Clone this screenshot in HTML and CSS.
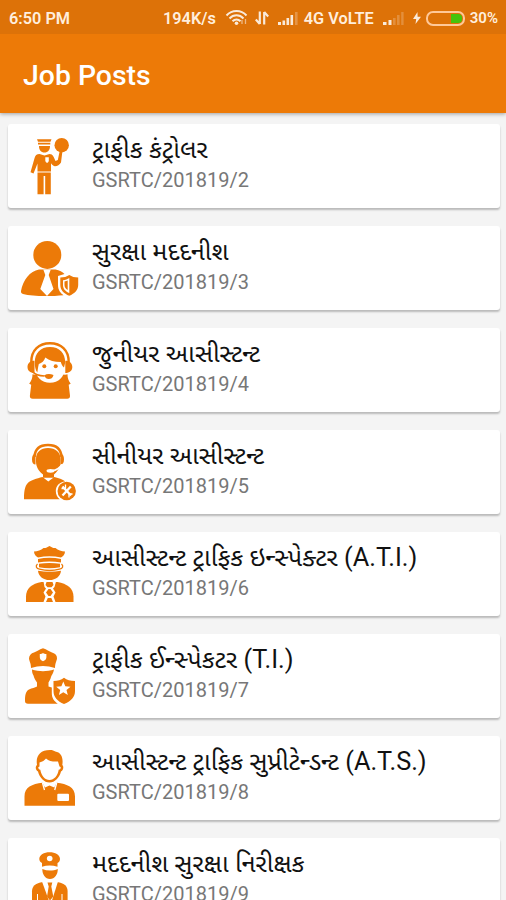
FILE: index.html
```html
<!DOCTYPE html>
<html lang="gu">
<head>
  <meta charset="UTF-8" />
  <meta name="viewport" content="width=device-width, initial-scale=1.0" />
  <title>Job Posts</title>
  <link rel="stylesheet" href="styles.css">
</head>
<body>

  <!-- status bar -->
  <div class="status-bar">
    <span class="time">6:50 PM</span>
    <span class="speed">194K/s</span>
    <svg class="wifi" width="24" height="18" viewBox="0 0 24 18">
      <g fill="none" stroke="#fff" stroke-width="2">
        <path d="M1.5 6.5C7 0.6 16 0.6 21.5 6.5" />
        <path d="M4.5 9.5c4-4.2 10-4.2 14 0" />
        <path d="M7.5 12.3c2.4-2.5 5.6-2.5 8 0" />
      </g>
      <circle cx="11.5" cy="14.3" r="1.8" fill="#fff" />
      <path d="M17 15v-4M20.5 10v5" stroke="#fff" stroke-width="1.3" opacity="0.6" />
    </svg>
    <svg class="data" width="14" height="14" viewBox="0 0 14 14">
      <path d="M4.8 0.5v12.500M0.800 8.500l4 4.500M9.200 13.500v-12.500M13.200 5.500l-4-4.500" fill="none" stroke="#fff" stroke-width="2.200" />
    </svg>
    <svg class="signal" width="20" height="13" viewBox="0 0 20 13">
      <path d="M0 10h3v3H0zM4.500 8.500h2.600V13H4.500zM8.500 6h2.600v7H8.500zM12.500 3h2.600v10h-2.600z" fill="#fff" />
      <path d="M17 0h2.600v13H17z" fill="#fff" opacity="0.3" />
    </svg>
    <span class="network">4G VoLTE</span>
    <svg class="signal2" width="21" height="13" viewBox="0 0 21 13">
      <path d="M0 10h3.500v3H0zM5.500 8h3v5h-3z" fill="#fff" />
      <path d="M10 6h2.600v7H10zM14 3h2.600v10H14zM18.200 0h2.400v13h-2.400z" fill="#fff" opacity="0.25" />
    </svg>
    <svg class="bolt" width="8" height="12" viewBox="0 0 8 12">
      <path d="M4.500 0L0 7h3.200L2.500 12 8 4.800H4.600z" fill="#fff" />
    </svg>
    <span class="battery"><span class="level"></span></span>
    <span class="percent">30%</span>
  </div>

  <header>
    <h1>Job Posts</h1>
  </header>

  <!-- job list -->
  <main class="job-list">
    <div class="card">
      <svg class="icon" viewBox="0 0 60 60">
        <path d="M17 3.300h14.500l-1 2.500h-12.500zM18 6.800h12.300v1.800H18zM19 10h11c0 4-2 6.500-5.500 6.500S19 14 19 10z" />
        <circle cx="41.700" cy="9.200" r="7.200" />
        <path d="M19.500 18l5 1.500 5-1.500c3.500 0 4.500 3.500 6 7l2.300-1 2-9.500h2.700L41 26.500c-1.500 2.300-3.500 3.500-6 3.800-1.500-.2-2.700-1.300-4-3v8.200H17.500v-8l-4 10-3-1.200 4-14c.6-2.800 2.200-4.300 5-4.300z" />
        <path d="M17.500 36.500h13.300v21.800h-5.600V40h-1.600v18.300h-6.100z" />
        <path class="cut" d="M25.300 21.300h3.500v3c0 1.500-.8 2.100-1.700 2.600-1-.5-1.800-1.100-1.800-2.600z" />
      </svg>
      <div class="info">
        <h2>ટ્રાફીક કંટ્રોલર</h2>
        <p>GSRTC/201819/2</p>
      </div>
    </div>

    <div class="card">
      <svg class="icon" viewBox="0 0 60 60">
        <circle cx="27.300" cy="16.900" r="14" />
        <path d="M1 53c2-11 9-20 18-21.500h16.500c4 .5 7 2.500 9 4.500L38 38v9c0 5 2.500 8 5.500 10.200-12 1.200-30.500 1.500-40.500-1.200-1.500-.5-2.200-1.500-2-3z" />
        <path class="cut" d="M23.300 31.500h7.500L28.700 37l4.800 14-6.500 7-6.700-7L25.300 37z" />
        <path d="M40.300 39.500c3.500 0 6.500-.8 9-2.500 2.500 1.700 5.300 2.500 8.900 2.500v7.500c0 5-3.500 8.500-8.900 10.800-5.500-2.300-9-5.800-9-10.800z" />
        <path class="cut" d="M49.300 40v15c-3.700-1.700-6.300-4-6.300-7.800v-5c2.500-.3 4.500-1 6.300-2.200z" />
        <path d="M44.500 43.500c1.300-.2 2.200-.5 3.200-.9V52c-2.200-1.400-3.200-3-3.200-5z" />
      </svg>
      <div class="info">
        <h2>સુરક્ષા મદદનીશ</h2>
        <p>GSRTC/201819/3</p>
      </div>
    </div>

    <div class="card">
      <svg class="icon" viewBox="0 0 60 60">
        <path class="line" d="M11.300 22C11.300 10 19 3.200 30 3.200S48.700 10 48.700 22" stroke-width="2.400" />
        <path d="M14.500 20.700V33c-4.500 0-7-2.400-7-6s2.500-6.300 7-6.300zM45.300 20.700V33c4.500 0 7-2.400 7-6s-2.500-6.300-7-6.300z" />
        <path d="M12.500 34.300c2 .7 4.500.5 6.500-.8h22c2 1.300 4.500 1.500 6.500.8 0 3.700 1 6.700 3.200 9.400l-2 1 1.300 11c.2 2-1 3-2.700 3H12.700c-2 0-3-1.100-2.800-3l1.300-11-2-1c2.300-2.700 3.300-5.700 3.300-9.400z" />
        <path class="cut" d="M15.500 19h29v10c0 7.500-6 13.800-14.500 13.800S15.500 36.500 15.500 29z" />
        <path d="M14.800 22.500C14.800 13 20.500 7 30 7s15.200 6 15.200 15.500l-1.200 5c-1.500-1-2.500-3-3.200-5.500-6.500 0-11.500-1.500-15.500-4.500-1 3.500-3.500 5.500-6.500 6.500-1 4-1 6.500-1.500 8.500-2-2.500-2.500-6-2.500-10z" />
        <circle cx="24.300" cy="26.300" r="2" /><circle cx="35.700" cy="26.300" r="2" />
        <path class="line" d="M12.500 31.500c2.500 3.200 6 4.300 12 4.500" stroke-width="1.600" />
        <path d="M24 35.500c3-1.800 6-1.800 9.500-.5-.8 3-2.500 4-4.700 4S25.500 38 24 35.500z" />
      </svg>
      <div class="info">
        <h2>જુનીયર આસીસ્ટન્ટ</h2>
        <p>GSRTC/201819/4</p>
      </div>
    </div>

    <div class="card">
      <svg class="icon" viewBox="0 0 60 60">
        <path class="line" d="M14.500 15C15 7 20 3 28 3s13 4 13.500 12" stroke-width="2.600" />
        <path d="M16 17C16 10 20.500 6 28 6S40.500 10 40.500 17v6c-1.500 4-3.500 7-6.500 9.500v3.200h-11v-3.200c-4-3-7-7.500-7-13z" />
        <path d="M15.500 12v10.500c-2.300 0-3.500-1.500-3.500-5.200s1.200-5.300 3.500-5.300zM40.500 12v10.500c2.300 0 3.500-1.500 3.500-5.200S42.800 12 40.500 12z" />
        <path class="cut-line" d="M42 22.500c-2.500 4-5.500 5.700-10 6.300" stroke-width="1.600" />
        <ellipse class="cut" cx="30.500" cy="28.800" rx="4" ry="1.900" />
        <path d="M22.500 35l5.800 4.500 6-4.500c5 1.200 9 2.700 11 4.500-6 .6-9.500 4.500-9.500 9.500 0 3.500 1.500 6.300 4 8.300H4c0-7 .5-13 4-16.500 3-2.800 8.500-4.300 14.500-5.800z" />
        <circle cx="46.700" cy="49" r="9.200" />
        <path class="cut-line" d="M42.500 44.500l8.500 9M50.800 44.500L42.500 53.500" stroke-width="2.300" />
        <path class="cut-line" d="M45.500 42.500v4h-4M49 55.500v-3.500h3.500" stroke-width="1.300" />
      </svg>
      <div class="info">
        <h2>સીનીયર આસીસ્ટન્ટ</h2>
        <p>GSRTC/201819/5</p>
      </div>
    </div>

    <div class="card">
      <svg class="icon" viewBox="0 0 60 60">
        <path d="M14 7.500c3.500 0 7-1.500 9.500-3.500 2 .3 3.800-.7 6-2 2.200 1.300 4 2.300 6 2 2.500 2 6 3.500 9.500 3.500 0 3-2 4.700-4 6-7.500-1.700-15.500-1.700-23 0-2-1.300-4-3-4-6z" />
        <path d="M18 15c7.500-1.700 15.500-1.700 23 0v3.500c-7.500-1.400-15.500-1.400-23 0z" />
        <path class="line" d="M17.500 20c-2.500 2.300-1 4.500 2 5.200 6.500 1.700 13.500 1.700 20 0 3-.7 4.500-2.900 2-5.200" stroke-width="1.300" />
        <path d="M19 19.800c7-1.200 14-1.200 21 0v3.400c-7 1.500-14 1.500-21 0z" />
        <path d="M18 26.700c7.500 1.500 15.500 1.500 23 0-.5 5.500-5 9.300-11.500 9.300S18.500 32.200 18 26.700z" />
        <path d="M21.500 38h16c9.500 1.500 16 6.500 16 14.500V58H6v-5.500C6 44.500 12 39.500 21.500 38z" />
        <path class="cut" d="M23.500 37.500h12.500l-1.500 5.500-1.500 1.500 2.500 4-2 4 2 5.500h-12l2-5.500-2-4 2.500-4-1.500-1.500z" />
        <path d="M26.500 38h6l1 3-2 2.300h-4l-2-2.300zM28.500 45h2l2.500 3.500-2.500 3.500h-2l-2.500-3.500zM27.800 54h3.500l1.700 4h-7z" />
      </svg>
      <div class="info">
        <h2>આસીસ્ટન્ટ ટ્રાફિક ઇન્સ્પેક્ટર (A.T.I.)</h2>
        <p>GSRTC/201819/6</p>
      </div>
    </div>

    <div class="card">
      <svg class="icon" viewBox="0 0 60 60">
        <path d="M9 12.500c0-3 2-5.200 5-6C17 5.500 19 3.500 23 2.300c4 1.200 6 3.200 9 4.200 3.500 1 5.200 3.200 5 6-.3 2.500-1.800 4-2 9.500-8-2.700-16-2.700-24 0 0-5-1.700-6.500-2-9.500z" />
        <path class="cut" d="M19.800 8c1.300 0 2.200-.3 3.200-1 1 .7 2 1 3.400 1v3.300c0 2-1.300 3-3.400 4-2-1-3.200-2-3.200-4z" />
        <path d="M12 23.500c7 2.300 15 2.300 22 0-.5 4-2.500 5.500-3 7.500-.5 2.500-2 4.500-2.500 5.500v4c1 .3 2 .7 3.300 1V47c0 5 2 8 6 10.700H8c-2 0-3-.7-3-2.700 0-5 .3-9.500 4-11.500 3-1.300 6-2 8-3v-4c-2-2.500-3-5.500-3.500-7-1-1.500-1.500-3-1.500-6z" />
        <path d="M33.500 35c4.500 0 7.500-1 10.500-3.200 3 2.200 6.200 3.200 11 3.200v10c0 6-4 10.200-11 13-6.500-2.800-10.500-7-10.500-13z" />
        <path class="cut" d="M43.300 35.500l2 4.800 5.200.4-4 3.400 1.300 5-4.500-2.800-4.400 2.800 1.300-5-4-3.400 5.200-.4z" />
      </svg>
      <div class="info">
        <h2>ટ્રાફીક ઈન્સ્પેકટર (T.I.)</h2>
        <p>GSRTC/201819/7</p>
      </div>
    </div>

    <div class="card">
      <svg class="icon" viewBox="0 0 60 60">
        <path d="M17 17C15.500 8 20 2 30 2c2.500 0 4 .5 5.300 1.600C41 4.500 43.500 9.500 42.300 17c1.500 1.200 1.500 5-1.300 6.500-1.500 6-6 11-11.500 11S19.500 29.500 18 23.500c-2.800-1.500-2.800-5.300-1-6.500z" />
        <path class="cut" d="M19.500 14.500c3-.8 5-2 6.500-4 3 2.700 7 3.300 12 3l1.500 5c2 .2 1.500 2.800-.8 3.200-1 6-4.700 10.300-9.200 10.300S21.500 28 20.300 21.700c-2.300-.4-2.700-3-.8-3.200z" />
        <path d="M22.500 34.700l2.500 4.800 4.500-2 4.800 2 2.400-4.800c10.500 1.300 18.300 4.300 18.300 13.800v9.200H4.500v-9.200C4.500 39 12 36 22.500 34.700z" />
        <path class="cut-line" d="M22.500 35l2 7M36.700 35l-2 7" stroke-width="1.300" />
        <rect class="cut" x="37.300" y="45.800" width="11.700" height="7.200" rx="1" />
      </svg>
      <div class="info">
        <h2>આસીસ્ટન્ટ ટ્રાફિક સુપ્રીટેન્ડન્ટ (A.T.S.)</h2>
        <p>GSRTC/201819/8</p>
      </div>
    </div>

    <div class="card">
      <svg class="icon" viewBox="0 0 60 60">
        <path d="M19.300 9c0-4 4.700-6.700 10.300-6.700S40 5 40 9c0 2.500-1.500 3.500-2.500 4v3.700c-5-1.500-10.500-1.500-15.500 0V13c-1.500-.7-2.700-2-2.700-4z" />
        <circle class="cut" cx="29.700" cy="8.500" r="2.800" />
        <path d="M22.300 19c5 2 10.500 2 15.500 0 0 5.500-3 10-7.800 10s-7.700-4.500-7.700-10z" />
        <path d="M21.500 32.300h16.800c6 1.200 9.300 4 9.300 9V60H12V41.300c0-5 3.500-7.800 9.500-9z" />
        <path class="cut" d="M22 31.500h16L30.500 55z" />
        <path d="M27.500 32.500h4.800l-1 4 2 10-3.300 4-3-4 1.700-10z" />
        <path class="cut-line" d="M17.500 44v16M42 44v16" stroke-width="1" />
      </svg>
      <div class="info">
        <h2>મદદનીશ સુરક્ષા નિરીક્ષક</h2>
        <p>GSRTC/201819/9</p>
      </div>
    </div>
  </main>

</body>
</html>
```

FILE: styles.css
```css
* {
  box-sizing: border-box;
}
body {
  margin: 0;
  height: 900px;
  overflow: hidden;
  font-family: Roboto, 'Noto Sans Gujarati', 'Noto Sans', sans-serif;
  background-color: #f4f4f4;
}
.status-bar {
  display: flex;
  align-items: center;
  height: 34px;
  padding: 2px 8px 0 9px;
  background-color: #dd7208;
  color: #ffeedd;
  font-size: 16.3px;
  font-weight: 600;
  white-space: nowrap;
}
.status-bar svg {
  flex-shrink: 0;
  opacity: 0.85;
}
.speed {
  margin-left: auto;
}
.wifi {
  margin-left: 9px;
}
.data {
  margin-left: 6px;
}
.signal {
  margin-left: 9px;
}
.network {
  margin-left: 6px;
}
.signal2 {
  margin-left: 9px;
}
.bolt {
  margin-left: 9px;
}
.battery {
  display: flex;
  justify-content: flex-end;
  width: 39px;
  height: 15px;
  margin-left: 5px;
  padding: 1px;
  border: 2px solid #ffc898;
  border-radius: 7px;
}
.level {
  width: 11px;
  background-color: #45c30b;
  border-radius: 0 4px 4px 0;
}
.percent {
  margin-left: 5px;
  font-size: 15px;
}
header {
  display: flex;
  align-items: center;
  height: 79px;
  padding: 4px 23px 0;
  background-color: #ed7a07;
  box-shadow: 0 1px 4px rgba(0, 0, 0, 0.35);
}
/* keeps the header shadow off the status bar */
.status-bar {
  position: relative;
}
h1 {
  margin: 0;
  color: #fff;
  font-size: 28.400px;
  font-weight: 500;
}
.job-list {
  display: flex;
  flex-direction: column;
  gap: 18px;
  padding: 11px 6px 0 8px;
}
.card {
  display: flex;
  flex-shrink: 0;
  height: 84px;
  padding: 12px 12px 0;
  background-color: #fff;
  border-radius: 3px;
  box-shadow: 0 2px 2px rgba(0, 0, 0, 0.24);
}
.icon {
  width: 60px;
  height: 60px;
  flex-shrink: 0;
  fill: #ec7a08;
}
.icon .cut {
  fill: #fff;
}
.icon .line {
  fill: none;
  stroke: #ec7a08;
}
.icon .cut-line {
  fill: none;
  stroke: #fff;
}
.info {
  margin-left: 12px;
  white-space: nowrap;
}
h2 {
  margin: 0;
  height: 32px;
  line-height: 28px;
  color: #111;
  font-size: 25.3px;
  font-weight: 400;
}
p {
  margin: 0;
  line-height: 24px;
  color: #777;
  font-size: 20px;
}
```
